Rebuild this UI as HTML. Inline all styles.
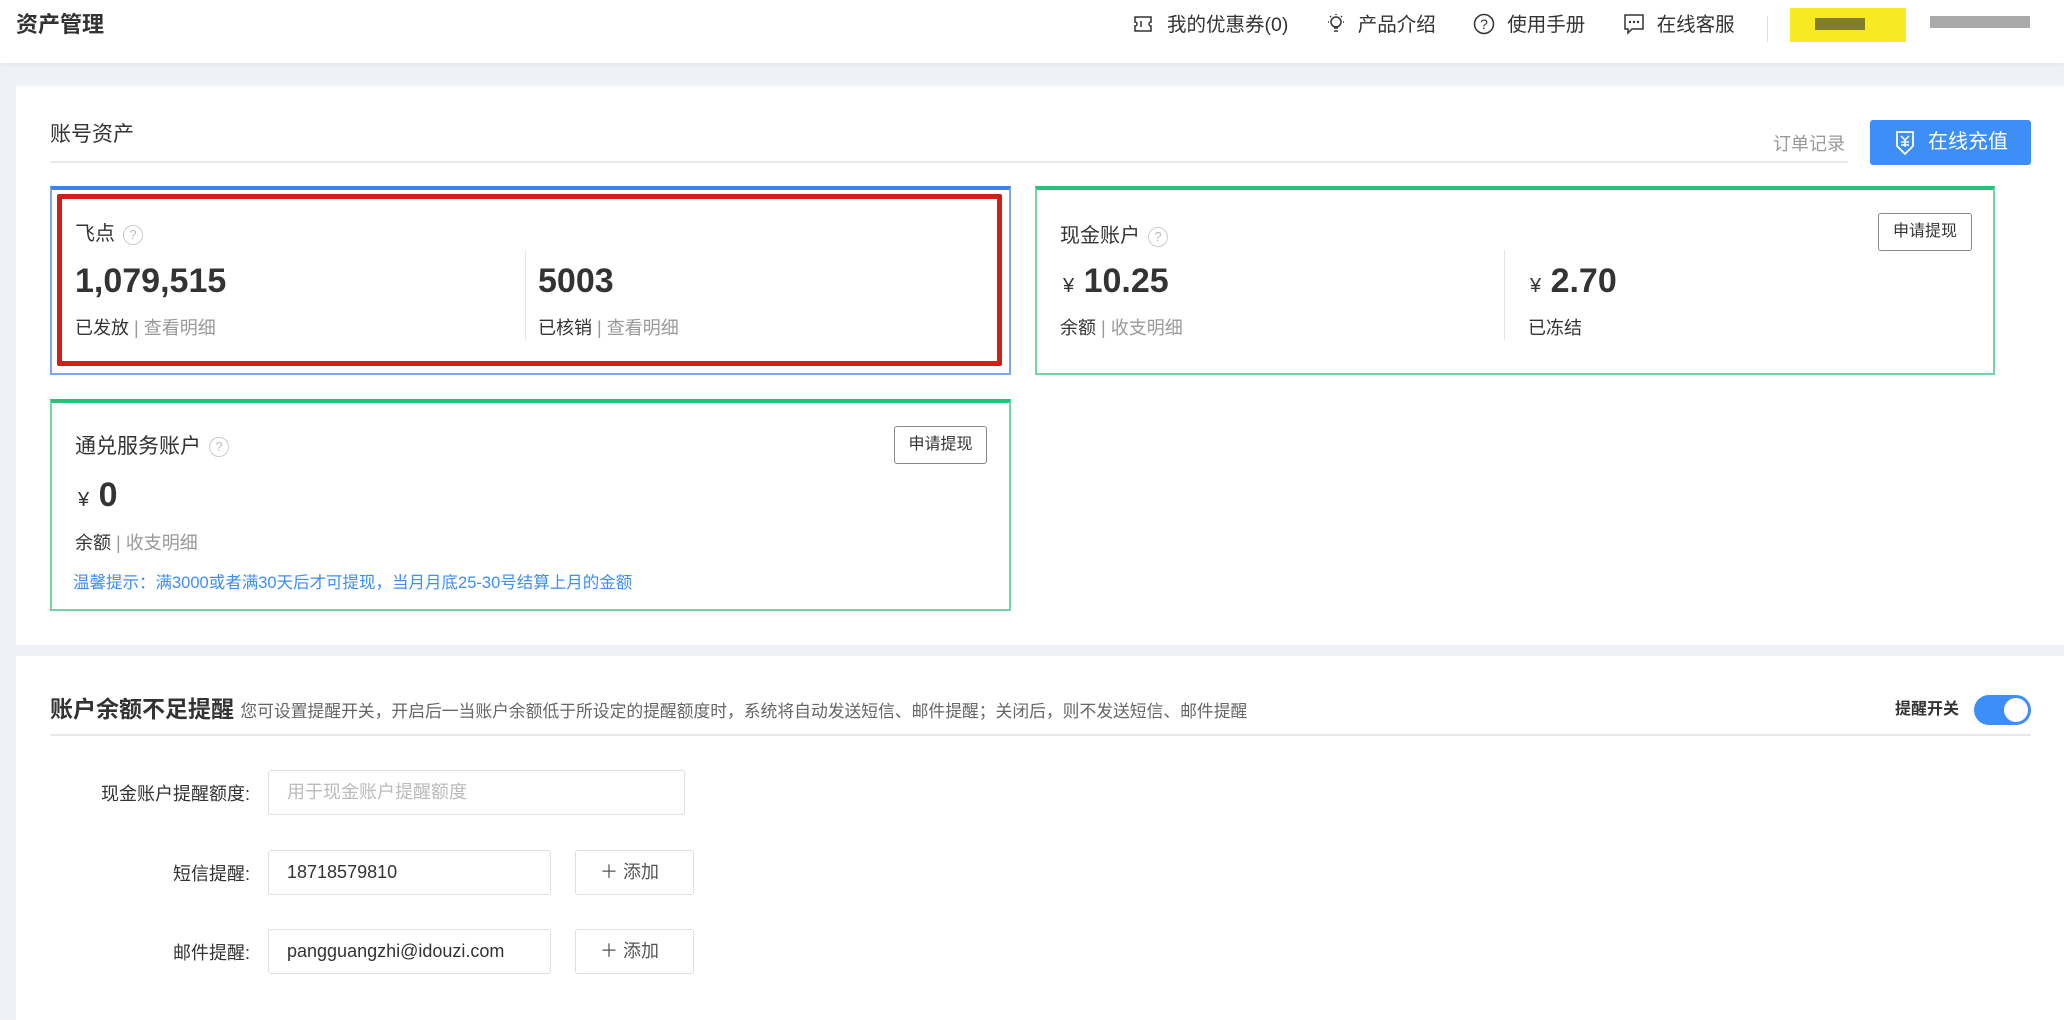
<!DOCTYPE html>
<html><head><meta charset="utf-8"><style>
*{box-sizing:border-box;margin:0;padding:0}
body{width:2064px;height:1020px;background:#eef1f6;font-family:"Liberation Sans","Noto Sans CJK SC",sans-serif;color:#333;position:relative;overflow:hidden}
.a{position:absolute;white-space:nowrap}
.hdr{left:0;top:0;width:2064px;height:63px;background:#fff;box-shadow:0 1px 4px rgba(0,0,0,.06)}
.panel{background:#fff}
.card{background:#fff;border:2px solid}
.q{display:inline-block;width:20px;height:20px;border:1.5px solid #ccc;border-radius:50%;color:#bbb;font-size:13px;text-align:center;line-height:17px;vertical-align:middle;margin-left:8px}
.big{font-size:34px;font-weight:bold;color:#333}
.sm{font-size:18px;color:#333}
.g{color:#999}
.btn{border:1.5px solid #888;border-radius:3px;font-size:16px;color:#333;text-align:center;line-height:44px;background:#fff}
.inp{border:1.5px solid #dcdfe6;border-radius:3px;background:#fff;font-size:18px;padding-left:18px;line-height:42px;color:#333}
.lbl{font-size:18px;color:#333;text-align:right;width:250px;left:0}
</style></head><body>
<div class="a hdr"></div>
<div class="a" style="left:16px;top:10px;font-size:22px;font-weight:bold;line-height:30px">资产管理</div>
<div class="a" style="left:1133px;top:11px;font-size:19.5px;line-height:28px;color:#333">
<svg width="20" height="20" viewBox="0 0 20 20" style="vertical-align:-3px;margin-right:14px"><path d="M2 3h16v5a2 2 0 0 0 0 4v5H2v-5a2 2 0 0 0 0-4z" fill="none" stroke="#333" stroke-width="1.5"/><path d="M8 7v6" stroke="#333" stroke-width="1.5"/></svg>我的优惠券(0)
<span style="margin-left:32px"><svg width="20" height="22" viewBox="0 0 20 22" style="vertical-align:-4px;margin-right:12px"><circle cx="10" cy="9" r="5" fill="none" stroke="#333" stroke-width="1.5"/><path d="M8 15h4M8 18h4M10 1v1M2 9h1M17 9h1M4 3l1 1M16 3l-1 1" stroke="#333" stroke-width="1.5"/></svg>产品介绍</span>
<span style="margin-left:32px"><svg width="22" height="22" viewBox="0 0 22 22" style="vertical-align:-4px;margin-right:12px"><circle cx="11" cy="11" r="9.5" fill="none" stroke="#333" stroke-width="1.5"/><text x="11" y="16" font-size="14" text-anchor="middle" fill="#333">?</text></svg>使用手册</span>
<span style="margin-left:32px"><svg width="22" height="22" viewBox="0 0 22 22" style="vertical-align:-4px;margin-right:12px"><path d="M2 2h18v14H9l-4 4v-4H2z" fill="none" stroke="#333" stroke-width="1.5"/><circle cx="7" cy="9" r="1.2" fill="#333"/><circle cx="11" cy="9" r="1.2" fill="#333"/><circle cx="15" cy="9" r="1.2" fill="#333"/></svg>在线客服</span>
</div>
<div class="a" style="left:1767px;top:16px;width:1px;height:26px;background:#ddd"></div>
<div class="a" style="left:1790px;top:8px;width:116px;height:34px;background:#f8ea20"></div>
<div class="a" style="left:1815px;top:18px;width:50px;height:12px;background:#333;opacity:.6"></div>
<div class="a" style="left:1930px;top:16px;width:100px;height:12px;background:#555;opacity:.5"></div>

<div class="a panel" style="left:16px;top:86px;width:2048px;height:559px"></div>
<div class="a" style="left:50px;top:121px;font-size:21px;line-height:28px">账号资产</div>
<div class="a" style="left:50px;top:161px;width:1798px;height:2px;background:#e8e8e8"></div>
<div class="a" style="left:1773px;top:130px;font-size:18px;color:#999">订单记录</div>
<div class="a" style="left:1870px;top:120px;width:161px;height:45px;background:#3d8ef7;border-radius:3px;color:#fff;font-size:20px;line-height:45px;padding-left:58px">在线充值</div>
<svg class="a" style="left:1894px;top:130px" width="22" height="26" viewBox="0 0 22 26"><path d="M3 2h16v14l-8 8-8-8z" fill="none" stroke="#fff" stroke-width="1.8"/><path d="M7 6l4 4 4-4M11 10v7M7 12h8M7 15h8" stroke="#fff" stroke-width="1.5" fill="none"/></svg>

<div class="a card" style="left:50px;top:186px;width:961px;height:189px;border-color:#7aa8ee;border-top:4px solid #3d82ec"></div>
<div class="a" style="left:57px;top:194px;width:945px;height:172px;border:5px solid #d21f16;border-radius:2px"></div>
<div class="a" style="left:75px;top:220px;font-size:20px;line-height:28px">飞点<span class="q">?</span></div>
<div class="a big" style="left:75px;top:262px">1,079,515</div>
<div class="a sm" style="left:75px;top:314px">已发放 <span class="g">| 查看明细</span></div>
<div class="a" style="left:525px;top:250px;width:1px;height:90px;background:#e4e4e4"></div>
<div class="a big" style="left:538px;top:262px">5003</div>
<div class="a sm" style="left:538px;top:314px">已核销 <span class="g">| 查看明细</span></div>

<div class="a card" style="left:1035px;top:186px;width:960px;height:189px;border-color:#6fd6a4;border-top:4px solid #27c27a"></div>
<div class="a" style="left:1060px;top:222px;font-size:20px;line-height:28px">现金账户<span class="q">?</span></div>
<div class="a btn" style="left:1878px;top:213px;width:94px;height:38px;line-height:35px">申请提现</div>
<div class="a big" style="left:1063px;top:262px"><span style="font-size:20px;font-weight:normal">¥</span> 10.25</div>
<div class="a sm" style="left:1060px;top:314px">余额 <span class="g">| 收支明细</span></div>
<div class="a" style="left:1504px;top:250px;width:1px;height:90px;background:#e4e4e4"></div>
<div class="a big" style="left:1530px;top:262px"><span style="font-size:20px;font-weight:normal">¥</span> 2.70</div>
<div class="a sm" style="left:1528px;top:314px">已冻结</div>

<div class="a card" style="left:50px;top:399px;width:961px;height:212px;border-color:#6fd6a4;border-top:4px solid #27c27a"></div>
<div class="a" style="left:75px;top:433px;font-size:21px;line-height:28px">通兑服务账户<span class="q">?</span></div>
<div class="a btn" style="left:894px;top:426px;width:93px;height:38px;line-height:35px">申请提现</div>
<div class="a big" style="left:78px;top:476px"><span style="font-size:20px;font-weight:normal">¥</span> 0</div>
<div class="a sm" style="left:75px;top:529px">余额 <span class="g">| 收支明细</span></div>
<div class="a" style="left:73px;top:569px;font-size:16.5px;color:#3d8ef7">温馨提示：满3000或者满30天后才可提现，当月月底25-30号结算上月的金额</div>

<div class="a panel" style="left:16px;top:656px;width:2048px;height:364px"></div>
<div class="a" style="left:50px;top:694px;font-size:23px;font-weight:bold;line-height:30px">账户余额不足提醒 <span style="font-size:16.8px;font-weight:normal;color:#666">您可设置提醒开关，开启后一当账户余额低于所设定的提醒额度时，系统将自动发送短信、邮件提醒；关闭后，则不发送短信、邮件提醒</span></div>
<div class="a" style="left:1895px;top:698px;font-size:16px;font-weight:bold;line-height:24px">提醒开关</div>
<div class="a" style="left:1974px;top:695px;width:57px;height:30px;border-radius:15px;background:#3d8ef7"><div style="position:absolute;right:3px;top:3px;width:24px;height:24px;border-radius:50%;background:#fff"></div></div>
<div class="a" style="left:50px;top:734px;width:1981px;height:2px;background:#e8e8e8"></div>

<div class="a lbl" style="top:780px">现金账户提醒额度:</div>
<div class="a inp" style="left:268px;top:770px;width:417px;height:45px;color:#bbb">用于现金账户提醒额度</div>
<div class="a lbl" style="top:860px">短信提醒:</div>
<div class="a inp" style="left:268px;top:850px;width:283px;height:45px">18718579810</div>
<div class="a inp" style="left:575px;top:850px;width:119px;height:45px;padding-left:24px;color:#555">＋ 添加</div>
<div class="a lbl" style="top:939px">邮件提醒:</div>
<div class="a inp" style="left:268px;top:929px;width:283px;height:45px;overflow:hidden">pangguangzhi@idouzi.com</div>
<div class="a inp" style="left:575px;top:929px;width:119px;height:45px;padding-left:24px;color:#555">＋ 添加</div>
</body></html>
